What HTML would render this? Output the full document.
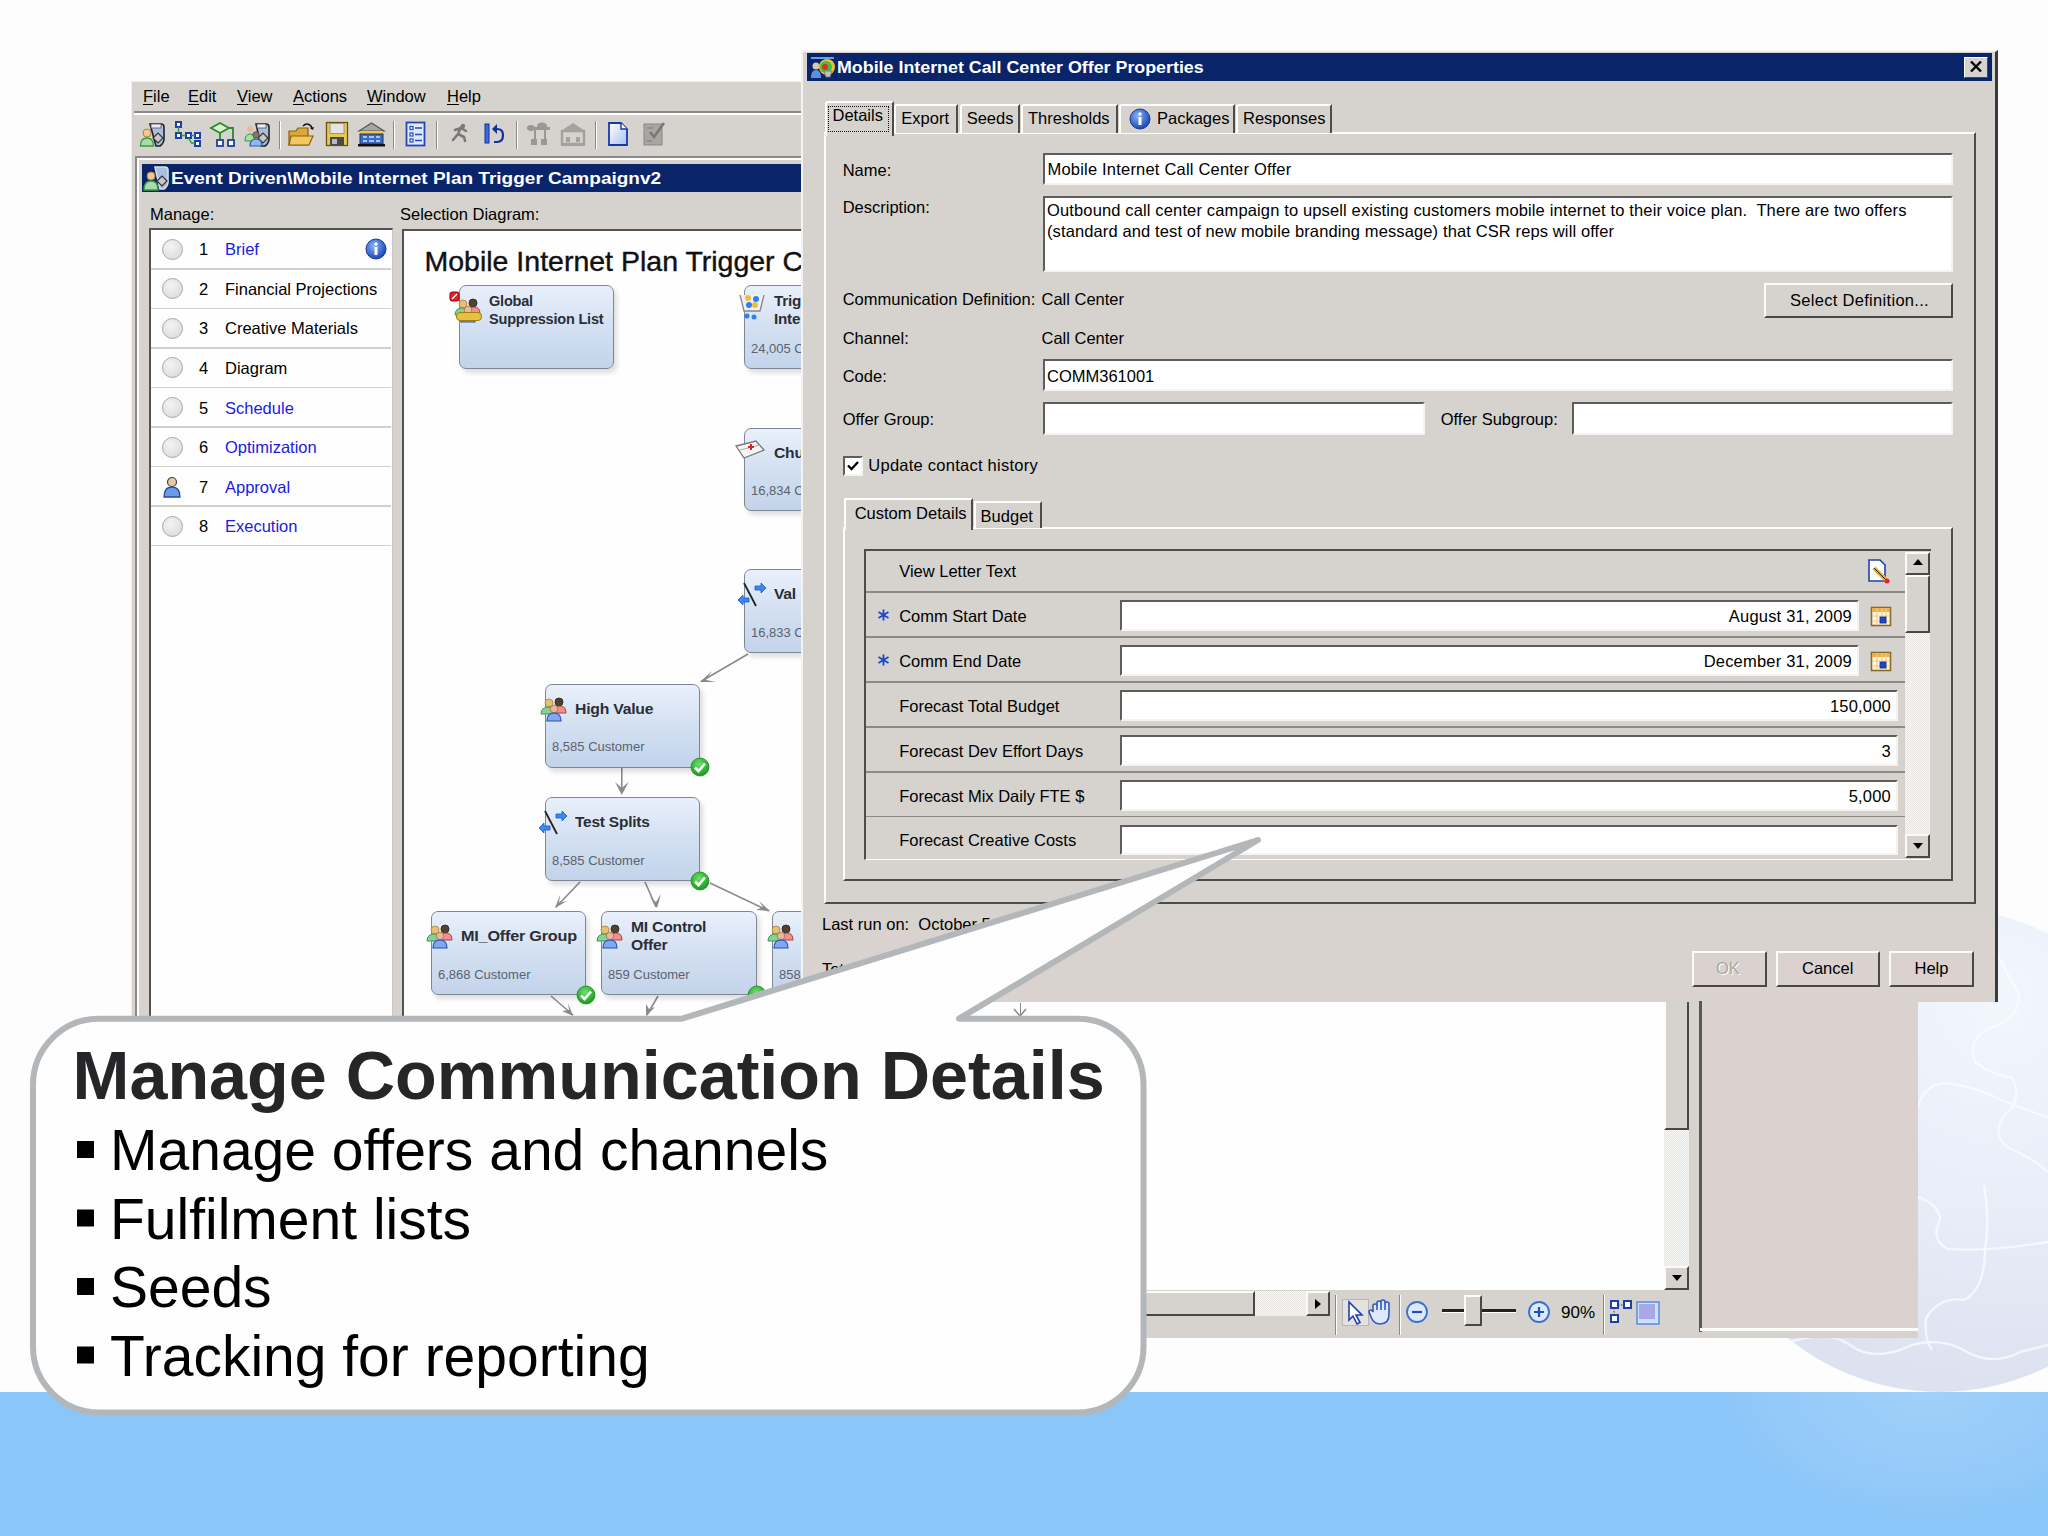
<!DOCTYPE html>
<html><head><meta charset="utf-8">
<style>
*{margin:0;padding:0;box-sizing:border-box}
html,body{width:2048px;height:1536px;overflow:hidden;background:#fdfdfe}
body{position:relative;font-family:"Liberation Sans",sans-serif}
.a{position:absolute}
.t{position:absolute;font-family:"Liberation Sans",sans-serif;font-size:16.5px;line-height:1;white-space:nowrap;color:#000}
.g{background:#d6d3ce}
.sunk{position:absolute;background:#fff;border-top:2px solid #5f5d5a;border-left:2px solid #5f5d5a;border-bottom:2px solid #f4f3f1;border-right:2px solid #f4f3f1}
.btn{position:absolute;background:#d6d3ce;border-top:2px solid #fbfbfa;border-left:2px solid #fbfbfa;border-right:2px solid #4a4846;border-bottom:2px solid #4a4846}
.ul{text-decoration:underline;text-underline-offset:2px}
.lnk{color:#1a1ae4}
.node{position:absolute;border:1.5px solid #7d8796;border-radius:7px;background:linear-gradient(#e9f0fb,#d3e0f2 50%,#c3d3ea);box-shadow:3px 4px 5px rgba(0,0,0,.13)}
.nt{position:absolute;font-family:"Liberation Sans",sans-serif;font-weight:700;font-size:14.5px;line-height:17.5px;color:#2a2e36;white-space:nowrap;letter-spacing:-.2px}
.nc{position:absolute;font-family:"Liberation Sans",sans-serif;font-size:13px;line-height:1;color:#5a6270;white-space:nowrap}
</style></head><body>

<!-- background -->
<svg class="a" style="left:1600px;top:880px" width="448" height="656" viewBox="1600 880 448 656">
<defs>
<radialGradient id="gl" cx="2000" cy="1000" r="380" gradientUnits="userSpaceOnUse"><stop offset="0" stop-color="#f2f6fd"/><stop offset=".55" stop-color="#e8edf8"/><stop offset="1" stop-color="#dce2f0"/></radialGradient>
<radialGradient id="rf" cx="1930" cy="1392" r="230" gradientUnits="userSpaceOnUse" gradientTransform="translate(0,1392) scale(1,.6) translate(0,-1392)"><stop offset="0" stop-color="#b8dafb" stop-opacity=".5"/><stop offset=".7" stop-color="#a8d2fa" stop-opacity=".3"/><stop offset="1" stop-color="#8bc6f8" stop-opacity="0"/></radialGradient>
<clipPath id="bandclip"><rect x="1600" y="1392" width="448" height="144"/></clipPath>
</defs>
<circle cx="1940" cy="1150" r="242" fill="url(#gl)"/>
<g stroke="#fdfeff" stroke-width="2.4" fill="none" opacity=".7" stroke-linejoin="round">
<path d="M1996,950 Q2000,962 2018,992 Q2022,1018 1990,1028 Q1966,1040 1975,1062 Q1990,1074 2012,1078 Q2024,1100 2003,1117 Q1990,1140 2015,1151 Q2035,1160 2048,1172"/>
<path d="M1916,1116 Q1920,1086 1944,1083 Q1975,1086 2001,1100 Q2025,1110 2048,1117"/>
<path d="M1918,1197 Q1940,1205 1940,1220 Q1930,1240 1948,1249 Q1985,1252 2048,1242"/>
<path d="M1984,1185 Q1990,1218 1985,1252 Q1984,1290 1964,1300 Q1940,1296 1926,1318 Q1924,1340 1932,1350"/>
<path d="M1790,1342 Q1830,1330 1850,1345 Q1870,1360 1900,1350 Q1930,1335 1960,1348 Q1990,1368 2020,1352 L2048,1345"/>
</g>
<rect x="1600" y="1392" width="448" height="144" fill="#8bc6f8"/>
<rect x="1600" y="1392" width="448" height="144" fill="url(#rf)"/>
</svg>
<div class="a" style="left:0;top:1392px;width:1600px;height:144px;background:#8bc6f8"></div>

<!-- LEFT WINDOW -->
<div class="a g" style="left:131px;top:81px;width:1787px;height:1257px;border-left:1px solid #f0efec;border-top:1px solid #f0efec"></div>
<!-- menu -->
<div class="t" style="left:143px;top:88px"><span class="ul">F</span>ile</div>
<div class="t" style="left:188px;top:88px"><span class="ul">E</span>dit</div>
<div class="t" style="left:237px;top:88px"><span class="ul">V</span>iew</div>
<div class="t" style="left:293px;top:88px"><span class="ul">A</span>ctions</div>
<div class="t" style="left:367px;top:88px"><span class="ul">W</span>indow</div>
<div class="t" style="left:447px;top:88px"><span class="ul">H</span>elp</div>
<div class="a" style="left:134px;top:111px;width:680px;height:1.5px;background:#8c8a86"></div>
<div class="a" style="left:134px;top:113px;width:680px;height:1.5px;background:#fff"></div>
<!-- toolbar separators -->
<div class="a" style="left:279px;top:121px;width:1px;height:28px;background:#8c8a86;box-shadow:1px 0 0 #fff"></div>
<div class="a" style="left:393px;top:121px;width:1px;height:28px;background:#8c8a86;box-shadow:1px 0 0 #fff"></div>
<div class="a" style="left:436px;top:121px;width:1px;height:28px;background:#8c8a86;box-shadow:1px 0 0 #fff"></div>
<div class="a" style="left:516px;top:121px;width:1px;height:28px;background:#8c8a86;box-shadow:1px 0 0 #fff"></div>
<div class="a" style="left:595px;top:121px;width:1px;height:28px;background:#8c8a86;box-shadow:1px 0 0 #fff"></div>
<!-- toolbar icons -->
<svg class="a" style="left:0;top:0" width="680" height="160" viewBox="0 0 680 160">
 <!-- 1 person + phone -->
 <g><path d="M150,124h11q3,0 3,3v12q0,4 -4,7l-4,0z" fill="#a8bfe0" stroke="#222" stroke-width="1.6"/><rect x="151" y="124" width="10" height="4" fill="#e8eef8" stroke="#555" stroke-width=".8"/><path d="M153,138l5,-5l5,5l-5,5z" fill="#c8c8c8" stroke="#333" stroke-width="1.2"/><circle cx="147" cy="133" r="4" fill="#f0c890" stroke="#b08050" stroke-width="1"/><path d="M140.5,146q0,-8 6.5,-8q6.5,0 6.5,8z" fill="#a8dca8" stroke="#3a9a3e" stroke-width="1.3"/></g>
 <!-- 2 hierarchy -->
 <g fill="#fff" stroke="#1c3fa8" stroke-width="2"><rect x="176" y="122" width="5" height="5"/><rect x="176" y="133" width="5" height="5"/><rect x="186" y="133" width="5" height="5"/><rect x="195" y="133" width="5" height="5"/><rect x="195" y="141" width="5" height="5"/></g>
 <path d="M178.5,127v6M181,135.5h5M191,135.5h4M188.5,138l3,5h3.5" stroke="#2a9a3a" stroke-width="1.4" fill="none"/>
 <!-- 3 decision tree -->
 <path d="M220,123l9,5l-9,5l-9,-5z" fill="#d8f0d0" stroke="#2a8a2a" stroke-width="1.8"/><path d="M220,133v8M229,128h4v13" stroke="#2a8a2a" stroke-width="1.8" fill="none"/><rect x="217" y="140" width="6" height="6" fill="#fff" stroke="#1c3fa8" stroke-width="1.8"/><rect x="228" y="140" width="6" height="6" fill="#fff" stroke="#1c3fa8" stroke-width="1.8"/>
 <!-- 4 people + phone -->
 <g><path d="M256,124h10q3,0 3,3v12q0,4 -4,7h-4z" fill="#a8bfe0" stroke="#222" stroke-width="1.6"/><rect x="257" y="124" width="9" height="4" fill="#e8eef8" stroke="#555" stroke-width=".8"/><path d="M258,138l5,-5l5,5l-5,5z" fill="#c8c8c8" stroke="#333" stroke-width="1.2"/><circle cx="250" cy="129" r="3" fill="#f0b890"/><path d="M245,141q0,-7 5,-7q5,0 5,7z" fill="#a8dca8" stroke="#3a9a3e"/><circle cx="256" cy="135" r="3.2" fill="#8a7a60" stroke="#444" stroke-width=".8"/><path d="M250,146q0,-7 6,-7q6,0 6,7z" fill="#90b8f0" stroke="#2858b8" stroke-width="1.2"/></g>
 <!-- 5 folder -->
 <path d="M289,131h7l2,-3h10v17h-19z" fill="#d8a838" stroke="#8a6010" stroke-width="1.2"/><path d="M291,136h22l-4,9h-20z" fill="#f2c860" stroke="#8a6010" stroke-width="1.2"/><path d="M303,126q4,-4 8,0l1,3" stroke="#111" stroke-width="1.6" fill="none"/><path d="M310,128l3,2l1,-3z" fill="#111"/>
 <!-- 6 floppy -->
 <rect x="326.5" y="122.5" width="21" height="23" fill="#e8c850" stroke="#6a5010" stroke-width="1.3"/><rect x="330" y="123.5" width="14" height="10" fill="#e4e4e8" stroke="#888" stroke-width=".8"/><rect x="330" y="137" width="14" height="8" fill="#4a4a4a"/><rect x="332" y="139" width="5" height="5" fill="#bbb"/>
 <!-- 7 bank -->
 <path d="M359,131l12.5,-8l12.5,8z" fill="#a8a6a0" stroke="#555" stroke-width="1.2"/><rect x="360" y="131" width="23" height="3" fill="#f0c840"/><rect x="360" y="134" width="23" height="10" fill="#3a6ac8" stroke="#234" stroke-width="1"/><path d="M363,137h4M369,137h5M376,137h4M363,141h4M369,141h5M376,141h4" stroke="#cfe0ff" stroke-width="1.6"/><rect x="358" y="144" width="27" height="2.5" fill="#111"/>
 <!-- 8 list -->
 <rect x="406.5" y="122.5" width="18" height="23" fill="#dce8ff" stroke="#2448b0" stroke-width="1.8"/><g fill="#fff" stroke="#2448b0" stroke-width="1.2"><rect x="410" y="126.5" width="3" height="3"/><rect x="410" y="133" width="3" height="3"/><rect x="410" y="139" width="3" height="3"/></g><path d="M415,128h7M415,134.5h7M415,140.5h7" stroke="#2448b0" stroke-width="1.5"/>
 <!-- 9 run -->
 <g stroke="#7a7a7a" stroke-width="2.6" fill="none" stroke-linecap="round"><path d="M461,127l-3,7l-5,6M458,134l6,3l1,4M455,130l6,-2l5,3"/></g><circle cx="463" cy="126" r="2.2" fill="#7a7a7a"/>
 <!-- 10 undo -->
 <rect x="485" y="124" width="4" height="19" fill="#3a6ae0" stroke="#10309a" stroke-width="1"/><path d="M494,142h3q6,0 6,-7q0,-6 -6,-6h-3" stroke="#10309a" stroke-width="2.2" fill="none"/><path d="M492,129l5,-5v10z" fill="#10309a"/>
 <!-- 11 gray tree -->
 <g fill="#9a9894"><ellipse cx="531" cy="128" rx="4" ry="3"/><ellipse cx="542" cy="126" rx="5" ry="3.5"/><rect x="528" y="127" width="22" height="3"/><rect x="534" y="129" width="2" height="10"/><rect x="544" y="129" width="2" height="10"/><rect x="531" y="139" width="6" height="6"/><rect x="541" y="139" width="6" height="6"/></g>
 <!-- 12 gray bank -->
 <g fill="#a4a29e"><path d="M561,131l12,-8l12,8z"/><rect x="562" y="131" width="22" height="13" fill="none" stroke="#a4a29e" stroke-width="2.5"/><rect x="566" y="137" width="4" height="5"/><rect x="576" y="137" width="4" height="5"/><rect x="561" y="143" width="24" height="3"/></g>
 <!-- 13 doc -->
 <defs><linearGradient id="dg" x1="0" y1="0" x2="1" y2="1"><stop offset="0" stop-color="#fff"/><stop offset="1" stop-color="#a8c0f8"/></linearGradient></defs>
 <path d="M609,123h12l6,6v16h-18z" fill="url(#dg)" stroke="#1838a8" stroke-width="1.8"/><path d="M621,123v6h6" fill="#fff" stroke="#1838a8" stroke-width="1.4"/>
 <!-- 14 gray edit -->
 <rect x="644" y="124" width="18" height="21" fill="#a8a6a2" stroke="#8a8884"/><path d="M650,132l4,5l10,-14" stroke="#777" stroke-width="2.5" fill="none"/><path d="M647,128h6M647,141h5" stroke="#8a8884" stroke-width="1.5"/>
</svg>
<!-- MDI frame -->
<div class="a" style="left:135px;top:156px;width:680px;height:880px;border-top:2px solid #8c8a86;border-left:2px solid #8c8a86"></div>
<div class="a" style="left:137px;top:158px;width:680px;height:880px;border-top:2px solid #fff;border-left:2px solid #fff"></div>
<div class="a" style="left:142px;top:164px;width:670px;height:28px;background:#0a246a"></div>
<svg class="a" style="left:0;top:0" width="180" height="200" viewBox="0 0 180 200"><path d="M155,167h10q3,0 3,3v12q0,4 -4,7h-4z" fill="#a8bfe0" stroke="#ddd" stroke-width="1.6"/><path d="M157,181l5,-5l5,5l-5,5z" fill="#c8c8c8" stroke="#333" stroke-width="1.2"/><circle cx="151" cy="176" r="4" fill="#f0c890" stroke="#b08050" stroke-width="1"/><path d="M144,190q0,-9 7,-9q7,0 7,9z" fill="#a8dca8" stroke="#3a9a3e" stroke-width="1.3"/></svg>
<div class="t" style="left:171px;top:170.5px;font-weight:700;font-size:16px;color:#fff;transform:scaleX(1.188);transform-origin:0 0">Event Driven\Mobile Internet Plan Trigger Campaignv2</div>
<div class="t" style="left:150px;top:206px">Manage:</div>
<div class="t" style="left:400px;top:206px">Selection Diagram:</div>
<!-- manage list -->
<div class="a" style="left:149px;top:228px;width:244px;height:800px;background:#fefefe;border-top:2px solid #55534f;border-left:2px solid #55534f;border-right:1.5px solid #c8c6c2"></div>
<div class="a" style="left:151px;top:268.1px;width:240px;height:1.5px;background:#d2d0cc"></div>
<div class="a" style="left:162px;top:238.8px;width:21px;height:21px;border-radius:50%;background:radial-gradient(circle at 40% 35%,#f4f4f4,#d6d6d6);border:1.3px solid #a8a8a8"></div>
<div class="t" style="left:199px;top:241.3px">1</div>
<div class="t lnk" style="left:225px;top:241.3px">Brief</div>
<div class="a" style="left:151px;top:307.6px;width:240px;height:1.5px;background:#d2d0cc"></div>
<div class="a" style="left:162px;top:278.3px;width:21px;height:21px;border-radius:50%;background:radial-gradient(circle at 40% 35%,#f4f4f4,#d6d6d6);border:1.3px solid #a8a8a8"></div>
<div class="t" style="left:199px;top:280.9px">2</div>
<div class="t" style="left:225px;top:280.9px">Financial Projections</div>
<div class="a" style="left:151px;top:347.1px;width:240px;height:1.5px;background:#d2d0cc"></div>
<div class="a" style="left:162px;top:317.9px;width:21px;height:21px;border-radius:50%;background:radial-gradient(circle at 40% 35%,#f4f4f4,#d6d6d6);border:1.3px solid #a8a8a8"></div>
<div class="t" style="left:199px;top:320.4px">3</div>
<div class="t" style="left:225px;top:320.4px">Creative Materials</div>
<div class="a" style="left:151px;top:386.7px;width:240px;height:1.5px;background:#d2d0cc"></div>
<div class="a" style="left:162px;top:357.4px;width:21px;height:21px;border-radius:50%;background:radial-gradient(circle at 40% 35%,#f4f4f4,#d6d6d6);border:1.3px solid #a8a8a8"></div>
<div class="t" style="left:199px;top:360.0px">4</div>
<div class="t" style="left:225px;top:360.0px">Diagram</div>
<div class="a" style="left:151px;top:426.2px;width:240px;height:1.5px;background:#d2d0cc"></div>
<div class="a" style="left:162px;top:397.0px;width:21px;height:21px;border-radius:50%;background:radial-gradient(circle at 40% 35%,#f4f4f4,#d6d6d6);border:1.3px solid #a8a8a8"></div>
<div class="t" style="left:199px;top:399.5px">5</div>
<div class="t lnk" style="left:225px;top:399.5px">Schedule</div>
<div class="a" style="left:151px;top:465.8px;width:240px;height:1.5px;background:#d2d0cc"></div>
<div class="a" style="left:162px;top:436.5px;width:21px;height:21px;border-radius:50%;background:radial-gradient(circle at 40% 35%,#f4f4f4,#d6d6d6);border:1.3px solid #a8a8a8"></div>
<div class="t" style="left:199px;top:439.1px">6</div>
<div class="t lnk" style="left:225px;top:439.1px">Optimization</div>
<div class="a" style="left:151px;top:505.3px;width:240px;height:1.5px;background:#d2d0cc"></div>
<svg class="a" style="left:162px;top:475.6px" width="20" height="22" viewBox="0 0 20 22"><circle cx="10" cy="6" r="4.5" fill="#e8c8a0" stroke="#444" stroke-width="1.2"/><path d="M2,21Q2,11 10,11Q18,11 18,21Z" fill="#6a9ae8" stroke="#28489a" stroke-width="1.3"/></svg>
<div class="t" style="left:199px;top:478.6px">7</div>
<div class="t lnk" style="left:225px;top:478.6px">Approval</div>
<div class="a" style="left:151px;top:544.9px;width:240px;height:1.5px;background:#d2d0cc"></div>
<div class="a" style="left:162px;top:515.6px;width:21px;height:21px;border-radius:50%;background:radial-gradient(circle at 40% 35%,#f4f4f4,#d6d6d6);border:1.3px solid #a8a8a8"></div>
<div class="t" style="left:199px;top:518.2px">8</div>
<div class="t lnk" style="left:225px;top:518.2px">Execution</div>
<svg class="a" style="left:365px;top:238px" width="22" height="22" viewBox="0 0 22 22"><defs><radialGradient id="ig" cx="40%" cy="35%" r="65%"><stop offset="0" stop-color="#8ab4f8"/><stop offset="1" stop-color="#1848b8"/></radialGradient></defs><circle cx="11" cy="11" r="10" fill="url(#ig)" stroke="#1a3a90"/><rect x="9.5" y="9" width="3" height="8" fill="#fff"/><circle cx="11" cy="6" r="1.7" fill="#fff"/></svg>

<!-- DIAGRAM -->
<div class="a" style="left:402px;top:229px;width:1262px;height:1061px;background:#fefefe;border-top:2px solid #55534f;border-left:2px solid #55534f"></div>
<div class="a" style="left:424.5px;top:247px;font-size:28.5px;line-height:1;white-space:nowrap;color:#111;-webkit-text-stroke:.4px #111">Mobile Internet Plan Trigger Campaign</div>
<svg class="a" style="left:0;top:0" width="810" height="1040" viewBox="0 0 810 1040">
<g stroke="#8a8a8a" stroke-width="1.6" fill="none">
<path d="M748,654L701,681.5"/><path d="M621.8,768V791"/><path d="M580,882L556,907"/><path d="M645,882L656,907"/><path d="M710,883L769,911"/>
<path d="M551,996L573,1015"/><path d="M658,996L647,1015"/>
</g>
<g fill="#8a8a8a">
<path d="M700,682L712,671L706,680L716,682Z"/>
<path d="M621.8,795L615,782L621.8,788L628.6,782Z"/>
<path d="M555,908L560,895L559,903L567,901Z"/>
<path d="M657,908L650,897L656,902L661,894Z"/>
<path d="M770,911L756,910L763,907L759,901Z"/>
<path d="M573,1016L562,1011L569,1010L568,1003Z"/><path d="M646,1016L646,1004L649,1009L655,1007Z"/>
</g></svg>
<div class="node" style="left:459px;top:285px;width:155px;height:84px"></div>
<svg class="a" style="left:454px;top:298px" width="28" height="26" viewBox="0 0 28 26"><circle cx="9" cy="6" r="4" fill="#e8c070" stroke="#a88040" stroke-width=".8"/><path d="M1,17Q1,10 9,10Q15,10 15,17Z" fill="#88d098" stroke="#3a9a4a" stroke-width="1"/><circle cx="19" cy="5" r="4" fill="#554030" stroke="#222" stroke-width=".8"/><path d="M13,16Q13,9 20,9Q26,9 26,16Z" fill="#f09090" stroke="#b04040" stroke-width="1"/><circle cx="14" cy="12" r="3.8" fill="#e8b898" stroke="#a07050" stroke-width=".8"/><path d="M7,24Q7,16 14,16Q21,16 21,24Z" fill="#80a8f0" stroke="#2850b8" stroke-width="1.2"/></svg>
<div class="nt" style="left:489px;top:293px">Global<br>Suppression List</div>
<svg class="a" style="left:449px;top:291px" width="12" height="12" viewBox="0 0 12 12"><rect x="1" y="1" width="9" height="9" rx="2" fill="#e02030" stroke="#900"/><path d="M3,8L8,3" stroke="#fff" stroke-width="1.5"/></svg>
<div class="a" style="left:456px;top:312px;width:26px;height:9px;border-radius:4px;background:#e8c040;border:1px solid #a08010"></div>
<div class="node" style="left:744px;top:285px;width:100px;height:84px"></div>
<div class="nt" style="left:774px;top:293px;transform:scaleX(1.05);transform-origin:0 0">Trig<br>Inte</div>
<div class="nc" style="left:751px;top:341.5px">24,005 C</div>
<svg class="a" style="left:738px;top:291px" width="30" height="30" viewBox="0 0 30 30"><path d="M2,4L6,20H22L26,4" stroke="#888" fill="#eef" stroke-width="1.3"/><circle cx="10" cy="7" r="3" fill="#f0c030"/><circle cx="18" cy="8" r="3" fill="#3080f0"/><circle cx="11" cy="14" r="3" fill="#3080f0"/><circle cx="17" cy="14" r="3" fill="#f0c030"/><circle cx="9" cy="25" r="2.5" fill="#3080f0"/><circle cx="16" cy="26" r="2.5" fill="#3080f0"/></svg>
<div class="node" style="left:744px;top:427.5px;width:100px;height:83px"></div>
<div class="nt" style="left:774px;top:444.5px;transform:scaleX(1.08);transform-origin:0 0">Chu</div>
<div class="nc" style="left:751px;top:484.0px">16,834 C</div>
<svg class="a" style="left:734px;top:438px" width="32" height="24" viewBox="0 0 32 24"><path d="M2,8L22,3L30,12L10,20Z" fill="#f4f4f4" stroke="#777" stroke-width="1.3"/><path d="M6,12L26,7" stroke="#aaa"/><path d="M14,9h6M17,6v6" stroke="#e02020" stroke-width="2"/></svg>
<div class="node" style="left:744px;top:569px;width:100px;height:84px"></div>
<svg class="a" style="left:737px;top:582px" width="30" height="26" viewBox="0 0 30 26"><path d="M7,1L19,24" stroke="#222" stroke-width="1.8"/><path d="M18,4h6v-3l5,5-5,5v-3h-6z" fill="#3a8af0" stroke="#1a58c0" stroke-width=".8"/><path d="M12,16h-6v-3l-5,5 5,5v-3h6z" fill="#3a8af0" stroke="#1a58c0" stroke-width=".8"/></svg>
<div class="nt" style="left:774px;top:586px;transform:scaleX(1.08);transform-origin:0 0">Val</div>
<div class="nc" style="left:751px;top:625.5px">16,833 C</div>
<div class="node" style="left:545px;top:683.5px;width:155px;height:84px"></div>
<svg class="a" style="left:540px;top:696.5px" width="28" height="26" viewBox="0 0 28 26"><circle cx="9" cy="6" r="4" fill="#e8c070" stroke="#a88040" stroke-width=".8"/><path d="M1,17Q1,10 9,10Q15,10 15,17Z" fill="#88d098" stroke="#3a9a4a" stroke-width="1"/><circle cx="19" cy="5" r="4" fill="#554030" stroke="#222" stroke-width=".8"/><path d="M13,16Q13,9 20,9Q26,9 26,16Z" fill="#f09090" stroke="#b04040" stroke-width="1"/><circle cx="14" cy="12" r="3.8" fill="#e8b898" stroke="#a07050" stroke-width=".8"/><path d="M7,24Q7,16 14,16Q21,16 21,24Z" fill="#80a8f0" stroke="#2850b8" stroke-width="1.2"/></svg>
<div class="nt" style="left:575px;top:700.5px;transform:scaleX(1.085);transform-origin:0 0">High Value</div>
<div class="nc" style="left:552px;top:740.0px">8,585 Customer</div>
<svg class="a" style="left:690px;top:757px" width="20" height="20" viewBox="0 0 20 20"><defs><radialGradient id="cg700767" cx="45%" cy="35%" r="65%"><stop offset="0" stop-color="#6ee06e"/><stop offset="1" stop-color="#169a1a"/></radialGradient></defs><circle cx="10" cy="10" r="9" fill="url(#cg700767)" stroke="#1a8a1a" stroke-width=".8"/><path d="M5,10.5L8.5,14L15,6.5" stroke="#fff" stroke-width="2.6" fill="none"/></svg>
<div class="node" style="left:545px;top:797px;width:155px;height:84px"></div>
<svg class="a" style="left:538px;top:810px" width="30" height="26" viewBox="0 0 30 26"><path d="M7,1L19,24" stroke="#222" stroke-width="1.8"/><path d="M18,4h6v-3l5,5-5,5v-3h-6z" fill="#3a8af0" stroke="#1a58c0" stroke-width=".8"/><path d="M12,16h-6v-3l-5,5 5,5v-3h6z" fill="#3a8af0" stroke="#1a58c0" stroke-width=".8"/></svg>
<div class="nt" style="left:575px;top:814px;transform:scaleX(1.065);transform-origin:0 0">Test Splits</div>
<div class="nc" style="left:552px;top:853.5px">8,585 Customer</div>
<svg class="a" style="left:690px;top:871px" width="20" height="20" viewBox="0 0 20 20"><defs><radialGradient id="cg700881" cx="45%" cy="35%" r="65%"><stop offset="0" stop-color="#6ee06e"/><stop offset="1" stop-color="#169a1a"/></radialGradient></defs><circle cx="10" cy="10" r="9" fill="url(#cg700881)" stroke="#1a8a1a" stroke-width=".8"/><path d="M5,10.5L8.5,14L15,6.5" stroke="#fff" stroke-width="2.6" fill="none"/></svg>
<div class="node" style="left:431px;top:911px;width:155px;height:84px"></div>
<svg class="a" style="left:426px;top:924px" width="28" height="26" viewBox="0 0 28 26"><circle cx="9" cy="6" r="4" fill="#e8c070" stroke="#a88040" stroke-width=".8"/><path d="M1,17Q1,10 9,10Q15,10 15,17Z" fill="#88d098" stroke="#3a9a4a" stroke-width="1"/><circle cx="19" cy="5" r="4" fill="#554030" stroke="#222" stroke-width=".8"/><path d="M13,16Q13,9 20,9Q26,9 26,16Z" fill="#f09090" stroke="#b04040" stroke-width="1"/><circle cx="14" cy="12" r="3.8" fill="#e8b898" stroke="#a07050" stroke-width=".8"/><path d="M7,24Q7,16 14,16Q21,16 21,24Z" fill="#80a8f0" stroke="#2850b8" stroke-width="1.2"/></svg>
<div class="nt" style="left:461px;top:928px;transform:scaleX(1.12);transform-origin:0 0">MI_Offer Group</div>
<div class="nc" style="left:438px;top:967.5px">6,868 Customer</div>
<svg class="a" style="left:576px;top:985px" width="20" height="20" viewBox="0 0 20 20"><defs><radialGradient id="cg586995" cx="45%" cy="35%" r="65%"><stop offset="0" stop-color="#6ee06e"/><stop offset="1" stop-color="#169a1a"/></radialGradient></defs><circle cx="10" cy="10" r="9" fill="url(#cg586995)" stroke="#1a8a1a" stroke-width=".8"/><path d="M5,10.5L8.5,14L15,6.5" stroke="#fff" stroke-width="2.6" fill="none"/></svg>
<div class="node" style="left:601px;top:911px;width:156px;height:84px"></div>
<svg class="a" style="left:596px;top:924px" width="28" height="26" viewBox="0 0 28 26"><circle cx="9" cy="6" r="4" fill="#e8c070" stroke="#a88040" stroke-width=".8"/><path d="M1,17Q1,10 9,10Q15,10 15,17Z" fill="#88d098" stroke="#3a9a4a" stroke-width="1"/><circle cx="19" cy="5" r="4" fill="#554030" stroke="#222" stroke-width=".8"/><path d="M13,16Q13,9 20,9Q26,9 26,16Z" fill="#f09090" stroke="#b04040" stroke-width="1"/><circle cx="14" cy="12" r="3.8" fill="#e8b898" stroke="#a07050" stroke-width=".8"/><path d="M7,24Q7,16 14,16Q21,16 21,24Z" fill="#80a8f0" stroke="#2850b8" stroke-width="1.2"/></svg>
<div class="nt" style="left:631px;top:919px;transform:scaleX(1.08);transform-origin:0 0">MI Control<br>Offer</div>
<div class="nc" style="left:608px;top:967.5px">859 Customer</div>
<svg class="a" style="left:747px;top:985px" width="20" height="20" viewBox="0 0 20 20"><defs><radialGradient id="cg757995" cx="45%" cy="35%" r="65%"><stop offset="0" stop-color="#6ee06e"/><stop offset="1" stop-color="#169a1a"/></radialGradient></defs><circle cx="10" cy="10" r="9" fill="url(#cg757995)" stroke="#1a8a1a" stroke-width=".8"/><path d="M5,10.5L8.5,14L15,6.5" stroke="#fff" stroke-width="2.6" fill="none"/></svg>
<div class="node" style="left:772px;top:911px;width:100px;height:84px"></div>
<svg class="a" style="left:767px;top:924px" width="28" height="26" viewBox="0 0 28 26"><circle cx="9" cy="6" r="4" fill="#e8c070" stroke="#a88040" stroke-width=".8"/><path d="M1,17Q1,10 9,10Q15,10 15,17Z" fill="#88d098" stroke="#3a9a4a" stroke-width="1"/><circle cx="19" cy="5" r="4" fill="#554030" stroke="#222" stroke-width=".8"/><path d="M13,16Q13,9 20,9Q26,9 26,16Z" fill="#f09090" stroke="#b04040" stroke-width="1"/><circle cx="14" cy="12" r="3.8" fill="#e8b898" stroke="#a07050" stroke-width=".8"/><path d="M7,24Q7,16 14,16Q21,16 21,24Z" fill="#80a8f0" stroke="#2850b8" stroke-width="1.2"/></svg>
<div class="nt" style="left:802px;top:928px"></div>
<div class="nc" style="left:779px;top:967.5px">858 Customer</div>

<!-- DIALOG -->
<div class="a g" style="left:801px;top:50px;width:1197px;height:952px;border-left:2px solid #f4f3f0;border-top:2px solid #f4f3f0;border-right:3px solid #3c3a38"></div>
<div class="a" style="left:807px;top:53px;width:1185px;height:28px;background:#0a246a"></div>
<div class="a" style="left:803px;top:912px;width:1192px;height:90px;background:linear-gradient(#d6d3ce,#d9d2cf 20px,#d9d2cf)"></div>
<svg class="a" style="left:810px;top:56px" width="27" height="23" viewBox="0 0 27 23"><rect x="1" y="1" width="23" height="2" fill="#6aa0e8"/><circle cx="17" cy="11" r="8" fill="#f0c030"/><circle cx="16" cy="11" r="6" fill="#40c040"/><circle cx="15" cy="11" r="3" fill="#e03020"/><circle cx="6" cy="10" r="3.5" fill="#d8c8a8"/><path d="M1,22Q1,14 6,14Q11,14 11,22Z" fill="#5a90e0"/><path d="M14,15h8l-2,6h-4z" fill="#c0c0c0" stroke="#777" stroke-width=".8"/></svg>
<div class="t" style="left:837px;top:59.4px;font-weight:700;color:#fff;transform:scaleX(1.081);transform-origin:0 0">Mobile Internet Call Center Offer Properties</div>
<div class="btn" style="left:1964px;top:56.5px;width:23.5px;height:21px;border-width:1.5px"></div>
<svg class="a" style="left:1969px;top:60px" width="14" height="13" viewBox="0 0 14 13"><path d="M2,1.5L12,11.5M12,1.5L2,11.5" stroke="#000" stroke-width="2.4"/></svg>
<div class="a" style="left:824px;top:132px;width:1152px;height:772px;border-top:2px solid #fdfdfc;border-left:2px solid #fdfdfc;border-right:2px solid #4e4c49;border-bottom:2px solid #4e4c49"></div>
<div class="a g" style="left:894.3px;top:103.5px;width:64.0px;height:29.5px;border-top:2px solid #fdfdfc;border-left:2px solid #fdfdfc;border-right:2.5px solid #4e4c49;border-top-left-radius:3px"></div>
<div class="t" style="left:901.3px;top:110.1px;">Export</div>
<div class="a g" style="left:959.7px;top:103.5px;width:60.59999999999991px;height:29.5px;border-top:2px solid #fdfdfc;border-left:2px solid #fdfdfc;border-right:2.5px solid #4e4c49;border-top-left-radius:3px"></div>
<div class="t" style="left:966.7px;top:110.1px;">Seeds</div>
<div class="a g" style="left:1021px;top:103.5px;width:96.5px;height:29.5px;border-top:2px solid #fdfdfc;border-left:2px solid #fdfdfc;border-right:2.5px solid #4e4c49;border-top-left-radius:3px"></div>
<div class="t" style="left:1028px;top:110.1px;">Thresholds</div>
<div class="a g" style="left:1119px;top:103.5px;width:115.5px;height:29.5px;border-top:2px solid #fdfdfc;border-left:2px solid #fdfdfc;border-right:2.5px solid #4e4c49;border-top-left-radius:3px"></div>
<div class="t" style="left:1157px;top:110.1px;">Packages</div>
<div class="a g" style="left:1236px;top:103.5px;width:96px;height:29.5px;border-top:2px solid #fdfdfc;border-left:2px solid #fdfdfc;border-right:2.5px solid #4e4c49;border-top-left-radius:3px"></div>
<div class="t" style="left:1243px;top:110.1px;">Responses</div>
<svg class="a" style="left:1129px;top:108px" width="22" height="22" viewBox="0 0 22 22"><defs><radialGradient id="ig2" cx="40%" cy="35%" r="65%"><stop offset="0" stop-color="#8ab4f8"/><stop offset="1" stop-color="#1848b8"/></radialGradient></defs><circle cx="11" cy="11" r="10" fill="url(#ig2)" stroke="#1a3a90"/><rect x="9.5" y="9" width="3" height="8" fill="#fff"/><circle cx="11" cy="6" r="1.7" fill="#fff"/></svg>
<div class="a g" style="left:824.5px;top:100.5px;width:69px;height:35px;border-top:2px solid #fdfdfc;border-left:2px solid #fdfdfc;border-right:2.5px solid #4e4c49;border-top-left-radius:3px"></div>
<div class="a" style="left:828px;top:105.5px;width:61px;height:26px;border:1.5px dotted #111"></div>
<div class="t" style="left:832.5px;top:107.3px;">Details</div>
<div class="t" style="left:842.7px;top:162.0px;">Name:</div>
<div class="t" style="left:842.7px;top:198.5px;">Description:</div>
<div class="t" style="left:842.7px;top:291.2px;">Communication Definition:</div>
<div class="t" style="left:842.7px;top:330.3px;">Channel:</div>
<div class="t" style="left:842.7px;top:367.7px;">Code:</div>
<div class="t" style="left:842.7px;top:411.0px;">Offer Group:</div>
<div class="t" style="left:868.3px;top:457.2px;;letter-spacing:.25px">Update contact history</div>
<div class="sunk" style="left:1042.5px;top:153px;width:910.5px;height:32px"></div>
<div class="t" style="left:1047.5px;top:161.0px;letter-spacing:.2px">Mobile Internet Call Center Offer</div>
<div class="sunk" style="left:1042.5px;top:196px;width:910.5px;height:76px"></div>
<div class="t" style="left:1047px;top:201.7px;letter-spacing:.14px">Outbound call center campaign to upsell existing customers mobile internet to their voice plan.&nbsp; There are two offers</div>
<div class="t" style="left:1047px;top:223.2px;letter-spacing:.12px">(standard and test of new mobile branding message) that CSR reps will offer</div>
<div class="t" style="left:1041.5px;top:291.2px;">Call Center</div>
<div class="t" style="left:1041.5px;top:330.3px;">Call Center</div>
<div class="btn" style="left:1764px;top:282.5px;width:189px;height:35px"></div>
<div class="t" style="left:1790px;top:291.5px;letter-spacing:.3px">Select Definition...</div>
<div class="sunk" style="left:1042.5px;top:359px;width:910.5px;height:32px"></div>
<div class="t" style="left:1047px;top:367.5px;">COMM361001</div>
<div class="sunk" style="left:1042.5px;top:402px;width:382.0px;height:32.5px"></div>
<div class="t" style="left:1440.7px;top:411.0px;">Offer Subgroup:</div>
<div class="sunk" style="left:1571.5px;top:402px;width:381.5px;height:32.5px"></div>
<div class="sunk" style="left:843px;top:456px;width:19.5px;height:19.5px"></div>
<svg class="a" style="left:846px;top:459px" width="14" height="14" viewBox="0 0 14 14"><path d="M2,6.5L5.5,10L12,3" stroke="#000" stroke-width="2.3" fill="none"/></svg>
<div class="a" style="left:843.3px;top:527px;width:1110.2px;height:354px;border-top:2px solid #fdfdfc;border-left:2px solid #fdfdfc;border-right:2px solid #4e4c49;border-bottom:2px solid #4e4c49"></div>
<div class="a g" style="left:974px;top:501px;width:67.5px;height:26.5px;border-top:2px solid #fdfdfc;border-left:2px solid #fdfdfc;border-right:2.5px solid #4e4c49"></div>
<div class="t" style="left:980.6px;top:507.5px;">Budget</div>
<div class="a g" style="left:844px;top:498px;width:129px;height:32px;border-top:2px solid #fdfdfc;border-left:2px solid #fdfdfc;border-right:2.5px solid #4e4c49"></div>
<div class="t" style="left:854.7px;top:504.5px;">Custom Details</div>
<div class="a" style="left:863.7px;top:548.6px;width:1067px;height:311px;border-top:2.5px solid #4e4c49;border-left:2.5px solid #4e4c49;border-bottom:1.5px solid #fdfdfc"></div>
<div class="t" style="left:899.2px;top:563.0px;">View Letter Text</div>
<div class="a" style="left:866px;top:591px;width:1039px;height:1.5px;background:#8c8a86"></div>
<div class="t" style="left:899.2px;top:608.0px;">Comm Start Date</div>
<div class="sunk" style="left:1120px;top:600px;width:739px;height:30.5px"></div>
<div class="t" style="right:196px;top:608.0px;letter-spacing:.2px">August 31, 2009</div>
<svg class="a" style="left:1870px;top:606px" width="22" height="21" viewBox="0 0 22 21"><rect x="1.5" y="1.5" width="19" height="18" fill="#fff6e0" stroke="#8a6a28" stroke-width="1.6"/><rect x="2" y="2" width="18" height="4" fill="#f0b040"/><path d="M2,10H20M2,15H20M7,2V19M12,2V19M16,2V19" stroke="#f0c890" stroke-width="1.2"/><rect x="10" y="11" width="6" height="6" fill="#1a48d0" stroke="#0a2a90" stroke-width=".8"/></svg>
<div class="a" style="left:866px;top:636px;width:1039px;height:1.5px;background:#8c8a86"></div>
<div class="t" style="left:899.2px;top:653.0px;">Comm End Date</div>
<div class="sunk" style="left:1120px;top:645px;width:739px;height:30.5px"></div>
<div class="t" style="right:196px;top:653.0px;letter-spacing:.2px">December 31, 2009</div>
<svg class="a" style="left:1870px;top:651px" width="22" height="21" viewBox="0 0 22 21"><rect x="1.5" y="1.5" width="19" height="18" fill="#fff6e0" stroke="#8a6a28" stroke-width="1.6"/><rect x="2" y="2" width="18" height="4" fill="#f0b040"/><path d="M2,10H20M2,15H20M7,2V19M12,2V19M16,2V19" stroke="#f0c890" stroke-width="1.2"/><rect x="10" y="11" width="6" height="6" fill="#1a48d0" stroke="#0a2a90" stroke-width=".8"/></svg>
<div class="a" style="left:866px;top:681px;width:1039px;height:1.5px;background:#8c8a86"></div>
<div class="t" style="left:899.2px;top:698.0px;">Forecast Total Budget</div>
<div class="sunk" style="left:1120px;top:690px;width:778px;height:30.5px"></div>
<div class="t" style="right:157px;top:698.0px;letter-spacing:.2px">150,000</div>
<div class="a" style="left:866px;top:726px;width:1039px;height:1.5px;background:#8c8a86"></div>
<div class="t" style="left:899.2px;top:742.5px;">Forecast Dev Effort Days</div>
<div class="sunk" style="left:1120px;top:735px;width:778px;height:30.5px"></div>
<div class="t" style="right:157px;top:742.5px;letter-spacing:.2px">3</div>
<div class="a" style="left:866px;top:771px;width:1039px;height:1.5px;background:#8c8a86"></div>
<div class="t" style="left:899.2px;top:787.5px;">Forecast Mix Daily FTE $</div>
<div class="sunk" style="left:1120px;top:780px;width:778px;height:30.5px"></div>
<div class="t" style="right:157px;top:787.5px;letter-spacing:.2px">5,000</div>
<div class="a" style="left:866px;top:815.6px;width:1039px;height:1.5px;background:#8c8a86"></div>
<div class="t" style="left:899.2px;top:832.0px;">Forecast Creative Costs</div>
<div class="sunk" style="left:1120px;top:824.6px;width:778px;height:30.5px"></div>
<svg class="a" style="left:1866px;top:558px" width="26" height="26" viewBox="0 0 26 26"><path d="M3,2H14L19,7V23H3Z" fill="#fff" stroke="#2040b0" stroke-width="1.6"/><path d="M8,10L20,22" stroke="#e8b020" stroke-width="4"/><path d="M8,10L20,22" stroke="#222" stroke-width="1"/><circle cx="21" cy="23" r="2.5" fill="#e02030"/></svg>
<div class="a" style="left:1905px;top:552px;width:24.5px;height:306px;background:repeating-conic-gradient(#e6e4e0 0 25%,#f8f8f6 0 50%) 0 0/2px 2px"></div>
<div class="btn" style="left:1905px;top:552px;width:24.5px;height:22.5px"></div>
<svg class="a" style="left:1911px;top:558px" width="14" height="8" viewBox="0 0 14 8"><path d="M2,7H12L7,1Z" fill="#000"/></svg>
<div class="btn" style="left:1905px;top:575px;width:24.5px;height:57.5px"></div>
<div class="btn" style="left:1905px;top:834px;width:24.5px;height:24px"></div>
<svg class="a" style="left:1911px;top:842px" width="14" height="8" viewBox="0 0 14 8"><path d="M2,1H12L7,7Z" fill="#000"/></svg>
<div class="t" style="left:822px;top:916.0px;">Last run on:&nbsp; October 5, 2009</div>
<div class="t" style="left:822px;top:961.0px;">Total records: 858</div>
<div class="btn" style="left:1691.5px;top:951px;width:75px;height:35.5px;background:#dbd1cf"></div>
<div class="t" style="left:1716px;top:960.0px;color:#a8a6a2;text-shadow:1px 1px 0 #fff">OK</div>
<div class="btn" style="left:1776px;top:951px;width:104px;height:35.5px;background:#dbd1cf"></div>
<div class="t" style="left:1802px;top:960.0px;">Cancel</div>
<div class="btn" style="left:1889px;top:951px;width:85px;height:35.5px;background:#dbd1cf"></div>
<div class="t" style="left:1914.5px;top:960.0px;">Help</div>
<svg class="a" style="left:877px;top:608.7px" width="13" height="12" viewBox="0 0 13 12"><path d="M6.5,0.5V11.5M1.5,3L11.5,9M11.5,3L1.5,9" stroke="#1848c8" stroke-width="1.8"/></svg>
<svg class="a" style="left:877px;top:653.5px" width="13" height="12" viewBox="0 0 13 12"><path d="M6.5,0.5V11.5M1.5,3L11.5,9M11.5,3L1.5,9" stroke="#1848c8" stroke-width="1.8"/></svg>

<!-- BELOW DIALOG: canvas scrollbars & toolbar -->
<div class="a" style="left:1020px;top:1003px;width:1px;height:12px;background:#8a8a8a"></div>
<svg class="a" style="left:1013px;top:1006px" width="14" height="12" viewBox="0 0 14 12"><path d="M1,3L7,10L13,3" stroke="#8a8a8a" stroke-width="1.5" fill="none"/></svg>
<!-- vertical scrollbar -->
<div class="a" style="left:1664px;top:1002px;width:25px;height:288px;background:repeating-conic-gradient(#e6e4e0 0 25%,#f8f8f6 0 50%) 0 0/2px 2px"></div>
<div class="btn" style="left:1664px;top:1002px;width:25px;height:128px;border-top:none"></div>
<div class="btn" style="left:1664px;top:1266px;width:25px;height:24px"></div>
<svg class="a" style="left:1670px;top:1274px" width="14" height="8" viewBox="0 0 14 8"><path d="M2,1H12L7,7Z" fill="#000"/></svg>
<!-- right panel -->
<div class="a" style="left:1702px;top:1002px;width:216px;height:327px;background:#dbd1cf"></div>
<div class="a" style="left:1699px;top:1001px;width:3px;height:331px;background:#5a5855"></div>
<div class="a" style="left:1700px;top:1328px;width:218px;height:3px;background:#fdfdfc"></div>
<!-- horizontal scrollbar -->
<div class="a" style="left:1140px;top:1291px;width:190px;height:25px;background:repeating-conic-gradient(#e6e4e0 0 25%,#f8f8f6 0 50%) 0 0/2px 2px"></div>
<div class="btn" style="left:1100px;top:1291px;width:155px;height:25px"></div>
<div class="btn" style="left:1306px;top:1291px;width:24px;height:25px"></div>
<svg class="a" style="left:1313px;top:1297px" width="10" height="14" viewBox="0 0 10 14"><path d="M2,2V12L8,7Z" fill="#000"/></svg>
<div class="a" style="left:1335px;top:1295px;width:1px;height:40px;background:#8c8a86;box-shadow:1px 0 0 #fff"></div>
<div class="a" style="left:1342px;top:1299px;width:27px;height:27px;background:#e4e2de;border:1px solid #b8b6b2"></div>
<svg class="a" style="left:1345px;top:1300px" width="22" height="26" viewBox="0 0 22 26"><path d="M4,2V20L8,16L12,24L15,22.5L11,15H17Z" fill="#fff" stroke="#2040b0" stroke-width="1.6"/></svg>
<svg class="a" style="left:1368px;top:1298px" width="28" height="28" viewBox="0 0 28 28"><path d="M5,14V8Q5,6 7,6Q9,6 9,8V12V5Q9,3 11,3Q13,3 13,5V12V4Q13,2 15,2Q17,2 17,4V12V6Q17,4 19,4Q21,4 21,6V16Q21,26 12,26Q6,26 3,19L1,14Q1,12 3,12Q4,12 5,14Z" fill="#dfe8fc" stroke="#3058c0" stroke-width="1.6"/></svg>
<div class="a" style="left:1399px;top:1295px;width:1px;height:40px;background:#8c8a86;box-shadow:1px 0 0 #fff"></div>
<svg class="a" style="left:1405px;top:1300px" width="24" height="24" viewBox="0 0 24 24"><circle cx="12" cy="12" r="10" fill="#dce8fc" stroke="#3a70d0" stroke-width="1.8"/><path d="M7,12H17" stroke="#2050b0" stroke-width="2.2"/></svg>
<div class="a" style="left:1442px;top:1309px;width:74px;height:2.5px;background:#222;box-shadow:0 1px 0 #fff"></div>
<div class="btn" style="left:1464px;top:1295px;width:18px;height:31px"></div>
<svg class="a" style="left:1527px;top:1300px" width="24" height="24" viewBox="0 0 24 24"><circle cx="12" cy="12" r="10" fill="#dce8fc" stroke="#3a70d0" stroke-width="1.8"/><path d="M7,12H17M12,7V17" stroke="#2050b0" stroke-width="2.2"/></svg>
<div class="t" style="left:1561px;top:1303.5px;font-size:17px">90%</div>
<div class="a" style="left:1603px;top:1295px;width:1px;height:40px;background:#8c8a86;box-shadow:1px 0 0 #fff"></div>
<svg class="a" style="left:1609px;top:1299px" width="52" height="28" viewBox="0 0 52 28"><g fill="#fff" stroke="#1c3fa8" stroke-width="2"><rect x="2" y="2" width="7" height="7"/><rect x="15" y="2" width="7" height="7"/><rect x="2" y="16" width="7" height="7"/></g><path d="M9,6H15M5,9V16" stroke="#1c3fa8" stroke-dasharray="1.5 1.5"/><rect x="28" y="3" width="22" height="22" fill="#cfe0fa" stroke="#5a8ae0" stroke-width="1.5"/><rect x="30" y="5" width="16" height="15" fill="#a8a8e8"/></svg>

<svg class="a" style="left:0;top:0" width="2048" height="1536" viewBox="0 0 2048 1536">
<path d="M99,1018.7 L682,1018.7 L1258,840 L959,1018.7 L1077.5,1018.7 A66,66 0 0 1 1143.5,1084.7 L1143.5,1346.5 A66,66 0 0 1 1077.5,1412.5 L99,1412.5 A66,66 0 0 1 33,1346.5 L33,1084.7 A66,66 0 0 1 99,1018.7 Z" fill="#fefefe" stroke="#b3b7ba" stroke-width="6" stroke-linejoin="round"/>
<rect x="77" y="1141" width="17" height="17" fill="#000"/>
<rect x="77" y="1209.5" width="17" height="17" fill="#000"/>
<rect x="77" y="1278" width="17" height="17" fill="#000"/>
<rect x="77" y="1346.5" width="17" height="17" fill="#000"/>
</svg>
<div class="a" style="left:72.5px;top:1040.8px;font-size:68.3px;font-weight:700;color:#262628;line-height:1;white-space:nowrap">Manage Communication Details</div>
<div class="a" style="left:110px;top:1116px;font-size:57px;color:#000;line-height:68.5px;white-space:nowrap">Manage offers and channels<br>Fulfilment lists<br>Seeds<br>Tracking for reporting</div>

</body></html>
